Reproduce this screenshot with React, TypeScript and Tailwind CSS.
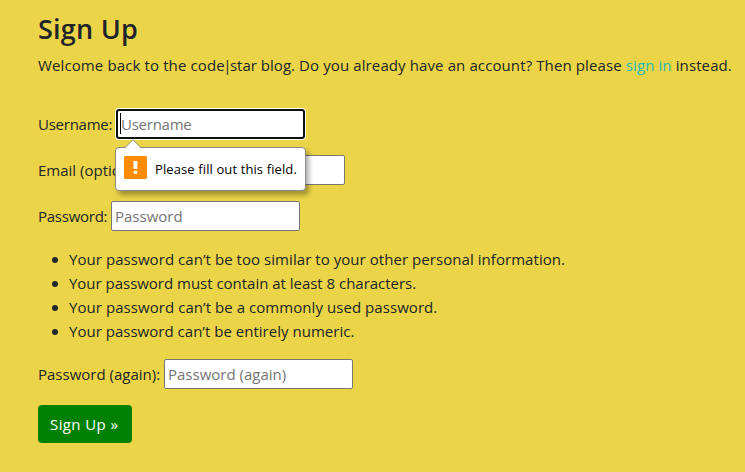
import React from "react";

const rules = [
  { text: "Your password can’t be too similar to your other personal information.", track: "tracking-[0.055px]" },
  { text: "Your password must contain at least 8 characters.", track: "tracking-[-0.02px]" },
  { text: "Your password can’t be a commonly used password.", track: "tracking-[0.06px]" },
  { text: "Your password can’t be entirely numeric.", track: "tracking-[0.02px]" },
];

const inputClass =
  "block h-[30px] w-[189px] rounded-[2px] border border-[#767676] bg-white pl-[3px] text-[15px] text-[#212529] placeholder:text-[#757575] placeholder:opacity-100 outline-none";

function ValidationBubble() {
  return (
    <div
      role="alert"
      className="absolute left-[-1px] top-[38px] z-10 flex h-[44px] w-[191px] items-center rounded-[4px] border border-[#8a8a8a] bg-white pl-[8px] text-[13px] tracking-[0.11px] whitespace-nowrap text-black shadow-[3px_4px_5px_rgba(0,0,0,0.32)]"
    >
      <svg className="absolute left-[8px] top-[-9px]" width="18" height="10" viewBox="0 0 18 10">
        <path d="M0.5 10 L9 1 L17.5 10" fill="#fff" />
        <path d="M0.5 9 L9 0.8 L17.5 9" fill="none" stroke="#999" strokeWidth="1" />
      </svg>
      <svg className="mr-[8px] mt-[-3px] shrink-0" width="23" height="23" viewBox="0 0 23 23">
        <rect width="23" height="23" rx="1.5" fill="#ff8c00" />
        <path d="M9.3 5H13.5L13.2 13H9.6Z" fill="#fff" />
        <rect x="9.6" y="14.7" width="3.6" height="3.2" rx="0.8" fill="#fff" />
      </svg>
      <span>Please fill out this field.</span>
    </div>
  );
}

export default function App() {
  return (
    <main className="h-[472px] w-[745px] overflow-hidden bg-[#ebd448] pl-[38px] pt-[12px] font-['Open_Sans','Noto_Sans',sans-serif] text-[15px] leading-6 text-[#212529]">
      <h1 className="text-[27px] leading-[33px] font-semibold tracking-[0.25px]">Sign Up</h1>
      <p className="mt-[8px] whitespace-nowrap tracking-[0.11px]">
        <span className="tracking-[0.12px]">Welcome back to the cod</span>
        <span className="tracking-[-1.5px]">e|</span>
        <span className="tracking-[0.02px]">star blog.</span> Do you already have an account? Then please{" "}
        <a className="text-[#23bbbb]">sign in</a> instead.
      </p>
      <form className="mt-8">
        <div className="flex h-[30px] items-center">
          <label className="w-[78px] shrink-0 whitespace-nowrap tracking-[-0.25px]"><span>Username:</span></label>
          <div className="relative">
            <input
              placeholder="Username"
              className="block h-[30px] w-[189px] rounded-[3px] border-2 border-[#101010] bg-white pl-[3px] text-[15px] tracking-[-0.25px] placeholder:text-[#757575] placeholder:opacity-100 shadow-[0_0_0_1px_#fff] outline-none"
            />
            <span className="absolute left-[4px] top-[4px] h-[21px] w-px bg-black" />
            <ValidationBubble />
          </div>
        </div>
        <div className="mt-4 flex h-[30px] items-center">
          <label className="w-[118px] shrink-0 whitespace-nowrap"><span>Email (optional):</span></label>
          <input className={inputClass} />
        </div>
        <div className="mt-4 flex h-[30px] items-center">
          <label className="w-[73px] shrink-0 whitespace-nowrap tracking-[-0.25px]"><span>Password:</span></label>
          <input className={inputClass} placeholder="Password" />
        </div>
        <ul className="mt-4 list-none">
          {rules.map((r) => (
            <li key={r.text} className="flex h-6 items-center whitespace-nowrap">
              <i className="mt-px ml-[14px] mr-[11px] size-[6px] shrink-0 rounded-full bg-[#212529]" />
              <span className={r.track}>{r.text}</span>
            </li>
          ))}
        </ul>
        <div className="mt-4 flex h-[30px] items-center">
          <label className="w-[126px] shrink-0 whitespace-nowrap"><span>Password (again):</span></label>
          <input className={inputClass} placeholder="Password (again)" />
        </div>
        <button type="button" className="mt-4 block h-[38px] w-[94px] rounded-[4px] bg-[#008000] pl-3 text-left tracking-[0.4px] whitespace-nowrap text-white">
          Sign Up »
        </button>
      </form>
    </main>
  );
}
